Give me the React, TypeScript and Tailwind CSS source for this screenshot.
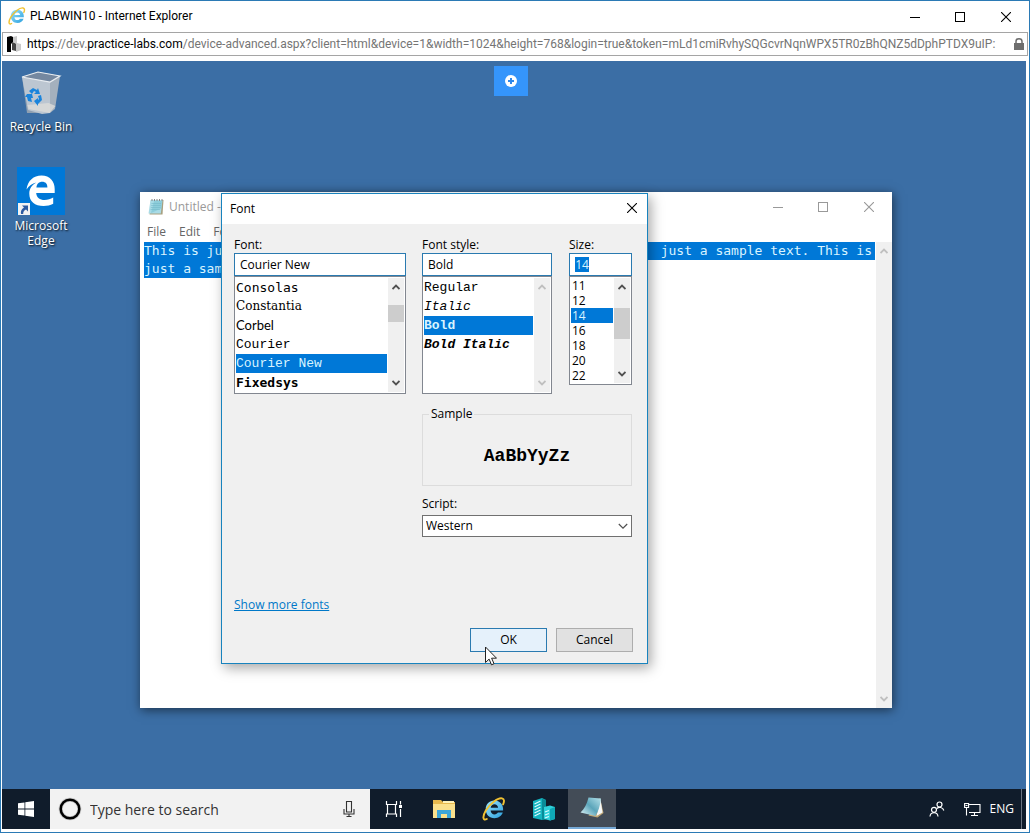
import type { ReactNode } from "react";
import clsx from "clsx";

const MONO = "font-['Liberation_Mono',monospace]";
const TEXT_MONO = "font-['DejaVu_Sans_Mono',monospace]";

type Row = { label: string; className?: string };

const fonts: Row[] = [
  { label: "Consolas", className: "font-['DejaVu_Sans_Mono',monospace] text-[13px]" },
  { label: "Constantia", className: "font-['DejaVu_Serif',serif] text-[12px]" },
  { label: "Corbel", className: "font-['Lato',sans-serif] text-[13px]" },
  { label: "Courier", className: `${MONO} text-[13px]` },
  { label: "Courier New", className: `${MONO} text-[13px]` },
  { label: "Fixedsys", className: "font-['DejaVu_Sans_Mono',monospace] text-[13px] font-bold" },
];

const styles: Row[] = [
  { label: "Regular", className: `${MONO} text-[13px]` },
  { label: "Italic", className: `${MONO} text-[13px] italic` },
  { label: "Bold", className: `${MONO} text-[13px] font-bold` },
  { label: "Bold Italic", className: `${MONO} text-[13px] font-bold italic` },
];

const sizes: Row[] = ["11", "12", "14", "16", "18", "20", "22"].map((label) => ({ label }));

function Minimize() {
  return (
    <svg width="10" height="10" viewBox="0 0 10 10" stroke="currentColor" shapeRendering="crispEdges">
      <path d="M0 5.5h10" />
    </svg>
  );
}

function Maximize() {
  return (
    <svg width="10" height="10" viewBox="0 0 10 10" fill="none" stroke="currentColor" shapeRendering="crispEdges">
      <path d="M.5.5h9v9h-9z" />
    </svg>
  );
}

function Close() {
  return (
    <svg width="10" height="10" viewBox="0 0 10 10" fill="none" stroke="currentColor">
      <path d="M0 0l10 10M10 0L0 10" strokeWidth="1.1" />
    </svg>
  );
}

function Chevron({ down = false }: { down?: boolean }) {
  return (
    <svg width="8" height="6" viewBox="0 0 8 6" fill="none" stroke="currentColor" strokeWidth="1.8">
      <path d={down ? "M.5 1l3.5 3.5L7.5 1" : "M.5 5L4 1.5 7.5 5"} />
    </svg>
  );
}

function IeLogo({ size }: { size: number }) {
  return (
    <svg width={size} height={size} viewBox="0 0 24 24" fill="none">
      <defs>
        <linearGradient id="ie-blue" x1="0" y1="0" x2="1" y2="1">
          <stop offset="0" stopColor="#9be2fa" />
          <stop offset="1" stopColor="#2ba0de" />
        </linearGradient>
      </defs>
      <path
        d="M12.3 3.6c-5 0-8.6 3.7-8.6 8.6 0 5.2 3.6 9 8.9 9 4 0 7-2.2 8.2-5.6h-4.900c-.7 1.200-1.800 1.800-3.300 1.800-2.300 0-3.900-1.500-4-3.900h12.500c.5-5.700-3.100-9.900-8.800-9.900zM8.700 10.700c.3-2 1.700-3.400 3.700-3.400s3.500 1.300 3.700 3.400z"
        fill="url(#ie-blue)"
        fillRule="evenodd"
      />
      <path
        d="M4.800 22C.8 24.300.2 19.700 3.800 13.600 7.600 7.200 15.800.3 20 1.300c2.600.6 2.300 3.300 1.100 6"
        stroke="#f1c232"
        strokeWidth="1.9"
        strokeLinecap="round"
      />
    </svg>
  );
}

function NotepadLogo() {
  return (
    <svg width="16" height="18" viewBox="0 0 16 18">
      <path d="M3 2h12.500l-1 14.500H1.500z" fill="#a8a080" />
      <path d="M2.500 2H14.500l-1.700 13.500H.5z" fill="#a9dbe6" />
      <path d="M6 3h8.300l-1 7.500L3 15z" fill="#7cc3d2" opacity=".6" />
      <path d="M3.500 5.500h9.500M3.200 7.500h9.500M2.900 9.500h9.500M2.600 11.500h9.500" stroke="#74b9c9" strokeWidth=".6" />
      <path d="M4 1v2M6.500 1v2M9 1v2M11.500 1v2M14 1v2" stroke="#888" strokeWidth="1" />
    </svg>
  );
}

function RecycleBin() {
  return (
    <svg width="48" height="48" viewBox="0 0 48 48">
      <path d="M5 9l16-5 22 4-4 6-6 31-23 0z" fill="#8e9fb1" />
      <path d="M5 9l28 5v31l-8 1-14-4z" fill="#bcc6d1" />
      <path d="M33 14l10-6-5 33-5 4z" fill="#a4b0bd" />
      <path d="M5 9l16-5 22 4-10 6z" fill="#7588a0" />
      <path d="M5 9l16-5 22 4-10 6z" fill="none" stroke="#e9edf1" strokeWidth="1.2" />
      <path d="M10.500 37l21-2 7 3-6 7-21-4z" fill="#dcdcda" opacity=".8" />
      <g fill="#1a84dc">
        <path d="M12 23l4-3 4 2 1-2 2 6-6 0 2-2-2-1-2 3z" />
        <path d="M10 26l5 0 1 4-2 0 1 4-4-1-1-4-2 0z" />
        <path d="M17 33l4-3 0 2 1-1-1-3 3-1 1 5-4 4 0 2z" />
      </g>
    </svg>
  );
}

function EdgeLogo() {
  return (
    <svg width="48" height="48" viewBox="0 0 48 48">
      <path d="M0 0h48v48H0z" fill="#0078d7" />
      <path
        d="M9.500 22.500C10.800 13.500 16.500 8.500 24.500 8.500c8.500 0 13.200 6 13.200 13.500v4H19.200c.2 4.600 3.700 7 8.400 7 3.200 0 6-.9 8.600-2.500v6.300c-2.800 1.500-6.200 2.200-9.600 2.200-8.800 0-14.300-4.700-14.300-12.300 0-5 2.700-9 7.100-11.200-4.200.8-7.600 3.300-9.900 7zM19.400 20.500h11c0-3.600-1.900-5.700-5.200-5.700-3.200 0-5.400 2.100-5.800 5.700z"
        fill="#fff"
      />
      <path d="M1 36h12v12H1z" fill="#f2f2f2" />
      <path d="M5 38.500h6v6l-2-2c-2 1-2.800 2.300-2.800 4.500H4c-.6-3 .6-5 3-6.500z" fill="#2d5aa0" />
    </svg>
  );
}

function WindowButtons({ className }: { className?: string }) {
  return (
    <div className={clsx("flex h-full", className)}>
      <button aria-label="Minimize" className="flex w-[45px] items-center justify-center">
        <Minimize />
      </button>
      <button aria-label="Maximize" className="flex w-[46px] items-center justify-center">
        <Maximize />
      </button>
      <button aria-label="Close" className="flex w-[46px] items-center justify-center">
        <Close />
      </button>
    </div>
  );
}

function ListBox({
  label,
  rows,
  selected,
  compact = false,
  disabled = false,
  thumb,
  className,
}: {
  label: string;
  rows: Row[];
  selected: string;
  compact?: boolean;
  disabled?: boolean;
  thumb?: string;
  className: string;
}) {
  return (
    <div className={clsx("flex border border-[#828790] bg-white p-px", className)}>
      <ul role="listbox" aria-label={label} className="min-w-0 flex-1">
        {rows.map((row) => (
          <li
            key={row.label}
            role="option"
            aria-selected={row.label === selected}
            className={clsx(
              "whitespace-nowrap",
              compact ? "h-[15px] pl-px leading-[15px]" : "h-[19px] leading-[19px]",
              row.label === selected && "bg-[#0078d7] text-[#d9f4ff]",
              row.className,
            )}
          >
            {row.label}
          </li>
        ))}
      </ul>
      <div
        className={clsx(
          "relative ml-px flex w-4 flex-col items-center justify-between bg-[#f0f0f0] py-1.5",
          disabled ? "text-[#bfbfbf]" : "text-[#505050]",
        )}
      >
        <Chevron />
        {thumb && <span className={clsx("absolute inset-x-0 bg-[#cdcdcd]", thumb)} />}
        <Chevron down />
      </div>
    </div>
  );
}

function Combo({
  id,
  label,
  value,
  marked = false,
  className,
  children,
}: {
  id: string;
  label: string;
  value: string;
  marked?: boolean;
  className: string;
  children: ReactNode;
}) {
  return (
    <div className={clsx("flex flex-col", className)}>
      <label htmlFor={id} className="h-4 leading-4">
        {label}
      </label>
      {marked ? (
        <div className="flex h-[23px] items-center border border-[#2a7ab0] bg-white pl-[5px]">
          <input
            id={id}
            defaultValue={value}
            className="h-[15px] w-[14px] bg-[#0078d7] text-center text-[#d9f4ff] outline-none"
          />
        </div>
      ) : (
        <input
          id={id}
          defaultValue={value}
          className="h-[23px] w-full border border-[#2a7ab0] bg-white px-[5px] outline-none"
        />
      )}
      {children}
    </div>
  );
}

function FontDialog() {
  return (
    <section
      role="dialog"
      aria-labelledby="font-title"
      className="absolute top-[132px] left-[219px] flex h-[471px] w-[427px] flex-col border border-[#1883be] bg-[#f0f0f0] text-[12px] text-black shadow-[3px_4px_12px_rgba(0,0,0,0.35)]"
    >
      <header className="flex h-[30px] shrink-0 items-center justify-between bg-white pl-2">
        <h2 id="font-title">Font</h2>
        <button aria-label="Close" className="flex h-7 w-[30px] items-center justify-center self-start">
          <Close />
        </button>
      </header>
      <form className="flex flex-1 flex-col pt-[13px] pr-3.5 pb-[11px] pl-3" onSubmit={(e) => e.preventDefault()}>
        <div className="flex items-start gap-4">
          <Combo id="font" label="Font:" value="Courier New" className="w-[172px]">
            <ListBox label="Fonts" rows={fonts} selected="Courier New" thumb="top-[27px] h-[17px]" className="h-[118px]" />
          </Combo>
          <Combo id="style" label="Font style:" value="Bold" className="w-[130px]">
            <ListBox label="Font styles" rows={styles} selected="Bold" disabled className="h-[118px]" />
          </Combo>
          <Combo id="size" label="Size:" value="14" marked className="ml-px w-[63px]">
            <ListBox label="Sizes" rows={sizes} selected="14" compact thumb="top-[30px] h-[31px]" className="h-[109px]" />
          </Combo>
        </div>
        <div className="mt-3 ml-[188px] flex w-[210px] flex-col">
          <fieldset className="h-20 border border-[#dcdcdc] pl-1.5">
            <legend className="px-0.5 leading-4">Sample</legend>
            <p className="flex h-[60px] items-center justify-center pt-2 pr-1.5 font-['Liberation_Mono',monospace] text-[18px] font-bold">
              AaBbYyZz
            </p>
          </fieldset>
          <label htmlFor="script" className="mt-2.5 h-[19px] leading-4">
            Script:
          </label>
          <div className="relative">
            <select
              id="script"
              className="h-[22px] w-full appearance-none border border-[#707070] bg-white pl-[3px] outline-none"
            >
              <option>Western</option>
            </select>
            <svg
              className="pointer-events-none absolute top-2 right-1"
              width="10"
              height="7"
              viewBox="0 0 10 7"
              fill="none"
              stroke="#505050"
              strokeWidth="1.2"
            >
              <path d="M.8 1l4.200 4.200L9.200 1" />
            </svg>
          </div>
        </div>
        <div className="mt-auto flex flex-col">
          <a href="#fonts" className="self-start leading-4 text-[#0078c8] underline">
            Show more fonts
          </a>
          <div className="mt-[15px] flex justify-end gap-[9px]">
            <button className="h-6 w-[77px] border border-[#2a7ab0] bg-[#e5f1fb]">OK</button>
            <button className="h-6 w-[77px] border border-[#adadad] bg-[#e1e1e1]">Cancel</button>
          </div>
        </div>
      </form>
    </section>
  );
}

function Notepad() {
  return (
    <section className="absolute top-[131px] left-[138px] flex h-[516px] w-[752px] flex-col bg-white text-[12px] shadow-[1px_2px_10px_rgba(0,0,0,0.55)]">
      <header className="flex h-[29px] shrink-0 items-center pl-2 text-[#999]">
        <NotepadLogo />
        <h2 className="flex-1 pl-[5px]">Untitled -</h2>
        <WindowButtons />
      </header>
      <nav className="flex h-[21px] shrink-0 items-center gap-[13px] pl-[7px] text-[#666]">
        {["File", "Edit", "Format"].map((item) => (
          <button key={item}>{item}</button>
        ))}
      </nav>
      <div className="flex flex-1">
        <div className={clsx("flex-1 pl-1 text-[13px] leading-[18px] text-[#d9f4ff]", TEXT_MONO)}>
          <p className="mr-px flex justify-between bg-[#0078d7] pr-[3px]">
            <span>This is just a sample text. This is just a sample text. This is</span>
            <span>just a sample text. This is</span>
          </p>
          <p>
            <span className="inline-block bg-[#0078d7]">just a sample text.</span>
          </p>
        </div>
        <div className="flex w-4 flex-col items-center justify-between bg-[#f0f0f0] py-1.5 text-[#bfbfbf]">
          <Chevron />
          <Chevron down />
        </div>
      </div>
    </section>
  );
}

function Shortcut({ icon, label }: { icon: ReactNode; label: string }) {
  return (
    <a
      href="#open"
      className="flex w-[78px] flex-col items-center text-center text-[12px] leading-[15px] text-white [text-shadow:1px_1px_2px_rgba(0,0,0,0.9)]"
    >
      {icon}
      <span className="mt-[3px] px-1">{label}</span>
    </a>
  );
}

function TaskButton({ label, active = false, children }: { label: string; active?: boolean; children: ReactNode }) {
  return (
    <button
      aria-label={label}
      className={clsx(
        "flex w-12 items-center justify-center",
        active && "border-b-2 border-[#76a9d6] bg-[#434c57]",
      )}
    >
      {children}
    </button>
  );
}

function Taskbar() {
  return (
    <footer className="flex h-10 shrink-0 bg-[#101c2b] text-white">
      <TaskButton label="Start">
        <svg width="16" height="16" viewBox="0 0 16 16" fill="#fff">
          <path d="M0 2.300l6.500-.9v6.100H0zM7.300 1.300L16 0v7.500H7.300zM0 8.400h6.500v6.100L0 13.700zM7.300 8.400H16V16l-8.700-1.300z" />
        </svg>
      </TaskButton>
      <label className="flex w-80 items-center bg-[#f2f2f2] pr-[15px] pl-2">
        <svg width="24" height="24" viewBox="0 0 24 24" fill="none">
          <circle cx="12" cy="12" r="9.300" stroke="#999" strokeWidth="4" opacity=".5" />
          <circle cx="12" cy="12" r="9.300" stroke="#000" strokeWidth="2.5" />
        </svg>
        <input
          aria-label="Search"
          placeholder="Type here to search"
          className="min-w-0 flex-1 bg-transparent pl-2 text-[14px] text-black outline-none placeholder:text-[#333]"
        />
        <svg width="12" height="18" viewBox="0 0 12 18" fill="none" stroke="#333" strokeWidth="1.1">
          <path d="M3.500 1.500h5v10.500h-5zM1 9v5h10V9M6 14v2.500M3.500 16.500h5" />
        </svg>
      </label>
      <div className="flex gap-0.5">
        <TaskButton label="Task View">
          <svg width="18" height="18" viewBox="0 0 18 18" fill="none" stroke="#fff" strokeWidth="1.2">
            <path d="M1.500 1v3.500h10V1M1.500 17v-3h10v3M2.500 4.500V14M10.500 4.500V14M15.500 1v3.500M15.500 9v8" />
            <path d="M14 5h3v3h-3z" fill="#fff" stroke="none" />
          </svg>
        </TaskButton>
        <TaskButton label="File Explorer">
          <svg width="22" height="20" viewBox="0 0 22 20">
            <path d="M0 1h8l2 2h12v16H0z" fill="#e8b94e" />
            <path d="M0 5h22v14H0z" fill="#fbe08c" />
            <path d="M10 2h11v2H10z" fill="#fff1b8" />
            <path d="M4 11h14v8h-4v-4H8v4H4z" fill="#3da5d9" />
          </svg>
        </TaskButton>
        <TaskButton label="Internet Explorer">
          <IeLogo size={24} />
        </TaskButton>
        <TaskButton label="Server Manager">
          <svg width="24" height="24" viewBox="0 0 24 24">
            <path d="M1 4l9-3 4 2v19l-4 1-9-2z" fill="#14b4c0" />
            <path d="M10 2l4 1v19l-4 1z" fill="#0a8b98" />
            <path d="M12 10l6-1.500 5 1.500v12l-5 1.500-6-1.500z" fill="#2fd0da" />
            <path d="M18 12l5-2v12l-5 1.500z" fill="#0fa7b5" />
            <path
              d="M2.500 7l6-3M2.500 10l6-3M2.500 13l6-3M2.500 16l6-3M2.500 19l6-3M13 15l4-1.500M13 18l4-1.500M13 21l4-1.500"
              stroke="#d8fbff"
              strokeWidth="1.3"
            />
          </svg>
        </TaskButton>
      </div>
      <TaskButton label="Notepad" active>
        <svg width="24" height="22" viewBox="0 0 24 22">
          <defs>
            <linearGradient id="sheet" x1="0" y1="1" x2="1" y2="0">
              <stop offset="0" stopColor="#e6f7fa" />
              <stop offset=".5" stopColor="#5ba5ba" />
              <stop offset="1" stopColor="#b7e2ea" />
            </linearGradient>
          </defs>
          <path d="M20 1l3.500 15-6 4.500-9-2z" fill="#c2a774" />
          <path d="M20.500 2l2 13.500-6 3.500z" fill="#f4f8f9" />
          <path d="M8.500.5L21 1.500C20 9 18.500 14 15.500 19L.5 15.500C4.500 12 7 6.500 8.500.5z" fill="url(#sheet)" />
        </svg>
      </TaskButton>
      <div className="ml-auto flex items-center">
        <button aria-label="People" className="mr-[19px]">
          <svg width="16" height="16" viewBox="0 0 16 16" fill="none" stroke="#fff" strokeWidth="1.2">
            <circle cx="10.500" cy="3.500" r="2.500" />
            <path d="M8 7.500c1.500-1.700 6-1.700 6.800 2" />
            <circle cx="5" cy="8.800" r="2.500" />
            <path d="M1 15.500c.4-5 7.600-5 8 0" />
          </svg>
        </button>
        <button aria-label="Network" className="mr-[9px]">
          <svg width="17" height="15" viewBox="0 0 17 15" fill="none" stroke="#fff" strokeWidth="1.1">
            <path d="M5 2.500h11v8H5M10.500 10.500v3M7 13.500h7M.6 1.500h4v4h-4zM2.500 5.500v8" />
            <path d="M1.500 3.500h2" />
          </svg>
        </button>
        <button className="mr-[7px] text-[12px]">ENG</button>
        <button aria-label="Show desktop" className="h-10 w-[5px] border-l border-[#6b7480]" />
      </div>
    </footer>
  );
}

export default function App() {
  return (
    <main className="flex h-screen min-h-[833px] w-full flex-col border border-[#2b7ab5] bg-white pr-[3px] pb-[3px] pl-px font-['Open_Sans',sans-serif] text-black">
      <header className="-mr-[3px] flex h-[31px] shrink-0 items-start pl-1.5">
        <div className="flex flex-1 items-center gap-1 pt-1.5">
          <IeLogo size={18} />
          <h1 className="font-['Roboto',sans-serif] text-[12px] leading-[18px]">PLABWIN10 - Internet Explorer</h1>
        </div>
        <WindowButtons className="h-7" />
      </header>
      <div className="-mr-0.5 mb-[5px] flex h-6 shrink-0 items-center border border-[#a5a5a5] pr-[3px] pl-1">
        <svg width="14" height="16" viewBox="0 0 14 16">
          <path d="M0 1l4-1 2 1v5l-2 2v8H0z" fill="#000" />
          <path d="M5 6l4 1v8l-4-1z" fill="#444" />
          <path d="M6 1l4-1v7l4 1v6l-5 2V8L6 6z" fill="#c9c9c9" />
        </svg>
        <p className="min-w-0 flex-1 overflow-hidden pl-1.5 font-['Roboto',sans-serif] text-[12px] leading-5 whitespace-nowrap text-[#757575]">
          <span className="text-black">https</span>://dev.<span className="text-black">practice-labs.com</span>
          /device-advanced.aspx?client=html&amp;device=1&amp;width=1024&amp;height=768&amp;login=true&amp;token=mLd1cmiRvhySQGcvrNqnWPX5TR0zBhQNZ5dDphPTDX9uIP:
        </p>
        <svg width="10" height="12" viewBox="0 0 10 12" className="ml-1.5">
          <path d="M0 5h10v7H0z" fill="#6e6e6e" />
          <path d="M2 5.500V3.500a3 2.700 0 0 1 6 0v2" fill="none" stroke="#6e6e6e" strokeWidth="1.5" />
        </svg>
      </div>
      <div className="relative flex-1 overflow-hidden bg-[#3b6ea5]">
        <nav className="flex flex-col gap-[33px] pt-[7px]">
          <Shortcut icon={<RecycleBin />} label="Recycle Bin" />
          <Shortcut icon={<EdgeLogo />} label="Microsoft Edge" />
        </nav>
        <button
          aria-label="Open toolbar"
          className="absolute top-[5px] left-[492px] flex h-[30px] w-[34px] items-center justify-center bg-[#3595fb]"
        >
          <svg width="12" height="12" viewBox="0 0 12 12">
            <circle cx="6" cy="6" r="6" fill="#fff" />
            <path d="M6 3v6M3 6h6" stroke="#3088ea" strokeWidth="2" />
          </svg>
        </button>
        <Notepad />
        <FontDialog />
        <svg className="absolute top-[585px] left-[483px]" width="12" height="20" viewBox="0 0 12 20">
          <path d="M.5 1v15.500l3.600-3.400 2.400 5.700 2.500-1.100-2.400-5.500h4.900z" fill="#fff" stroke="#222" />
        </svg>
      </div>
      <Taskbar />
    </main>
  );
}
